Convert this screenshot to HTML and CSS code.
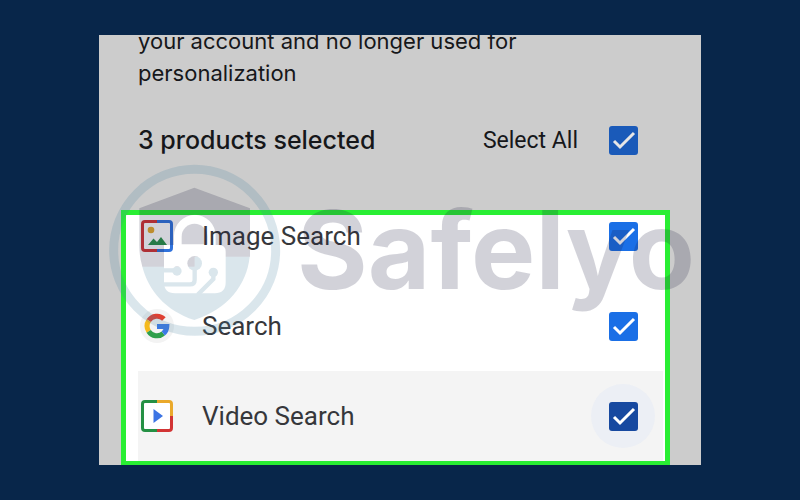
FILE: index.html
```html
<!DOCTYPE html>
<html lang="en">
<head>
    <meta charset="UTF-8">
    <title>3 products selected</title>
    <meta name="viewport" content="width=device-width, initial-scale=1.0">
    <link rel="stylesheet" href="styles.css">
</head>
<body>
    <main class="panel">
        <p class="intro">your account and no longer used for<br>personalization</p>

        <div class="select-all">
            <h1>3 products selected</h1>
            <label for="all">Select All</label>
            <input type="checkbox" id="all" class="check dim" checked>
        </div>

        <div class="highlight">
            <ul class="products">
                <li>
                    <svg class="icon" viewBox="0 0 34 34" fill="none" stroke-width="3">
                        <path d="M17 2.500H5Q2.500 2.500 2.500 5V29Q2.500 31.500 5 31.500H17" stroke="#d23434"/>
                        <path d="M17 2.500H29Q31.500 2.500 31.500 5V29Q31.500 31.500 29 31.500H17" stroke="#2f72dc"/>
                        <circle cx="11" cy="11" r="3.300" fill="#e6a92b"/>
                        <path d="M8 26L13.500 19.500L17 23L21 18L27 26Z" fill="#2a9249"/>
                    </svg>
                    <label for="image">Image Search</label>
                    <span class="halo"><input type="checkbox" id="image" class="check" checked></span>
                </li>
                <li>
                    <svg class="icon" viewBox="0 0 34 34">
                        <circle cx="17" cy="17" r="17" fill="#f3f3f3"/>
                        <g fill="none" stroke-width="5">
                            <path d="M8.700 11.700A9.800 9.800 0 0 1 23.900 10" stroke="#df4032"/>
                            <path d="M8.700 22.300A9.800 9.800 0 0 1 8.700 11.700" stroke="#f5b91c"/>
                            <path d="M23.300 24.500A9.800 9.800 0 0 1 8.700 22.300" stroke="#2f9f4c"/>
                            <path d="M17 17.500H26.800A9.800 9.800 0 0 1 23.300 24.500" stroke="#3b78e7"/>
                        </g>
                    </svg>
                    <label for="search">Search</label>
                    <span class="halo"><input type="checkbox" id="search" class="check" checked></span>
                </li>
                <li class="active">
                    <svg class="icon" viewBox="0 0 34 34" fill="none" stroke-width="3">
                        <rect x="2.500" y="2.500" width="29" height="29" rx="2" fill="#fff"/>
                        <path d="M17 2.500H5Q2.500 2.500 2.500 5V29Q2.500 31.500 5 31.500H17" stroke="#259044"/>
                        <path d="M17 2.500H29Q31.500 2.500 31.500 5V17" stroke="#eaa92b"/>
                        <path d="M31.500 17V29Q31.500 31.500 29 31.500H17" stroke="#d23434"/>
                        <path d="M13.500 10V24L23 17Z" fill="#3c74e4"/>
                    </svg>
                    <label for="video">Video Search</label>
                    <span class="halo"><input type="checkbox" id="video" class="check" checked></span>
                </li>
            </ul>
        </div>

        <div class="watermark">
            <svg class="badge" viewBox="39 24 519 522">
                <mask id="lock">
                    <rect x="39" y="24" width="519" height="522" fill="#fff"/>
                    <path d="M237 270V242A62 62 0 0 1 362 242V270H372Q392 270 392 290V382Q392 415 359 415H240Q207 415 207 382V270Z" fill="#000"/>
                    <path d="M260 268V245A38 38 0 0 1 337 245V268Z" fill="#fff"/>
                    <g fill="none" stroke="#fff" stroke-width="13">
                        <path d="M205 346H240"/>
                        <path d="M299 325V374Q299 388 285 388H205"/>
                        <path d="M355 352V372L308 419"/>
                    </g>
                    <g fill="#fff">
                        <circle cx="246" cy="348" r="14"/>
                        <circle cx="299" cy="325" r="22"/>
                        <circle cx="355" cy="352" r="14"/>
                    </g>
                </mask>
                <circle class="ring" cx="299" cy="286" r="243"/>
                <g mask="url(#lock)">
                    <path class="shield-top" d="M298 98L465 160V305H299V335H142Q133 305 133 270V160Z"/>
                    <path class="shield-base" d="M142 335H299V305H464C455 390 398 462 298 495C210 466 160 405 142 335Z"/>
                </g>
            </svg>
            <span class="brand">Safelyo</span>
        </div>
    </main>
</body>
</html>
```

FILE: styles.css
```css
body {
    margin: 0;
    padding: 35px 99px;
    background: #08264a;
    color: #16171a;
    font-family: Roboto, "Liberation Sans", sans-serif;
}
.panel {
    position: relative;
    overflow: hidden;
    background: #ccc;
}
.intro {
    margin: -10px 39px 0;
    font-family: Inter, sans-serif;
    font-size: 22px;
    line-height: 32px;
}
.select-all {
    display: flex;
    align-items: center;
    height: 64px;
    margin: 19px 63px 0 39px;
    font-size: 23px;
}
.select-all h1 {
    flex: 1;
    margin: 0;
    font-family: Inter, sans-serif;
    font-size: 25px;
    font-weight: 500;
}
.select-all label {
    margin-right: 31px;
}
.check {
    appearance: none;
    width: 29px;
    height: 29px;
    margin: 0;
    border-radius: 3px;
    background: #1a6fe6 url("data:image/svg+xml,%3Csvg xmlns='http://www.w3.org/2000/svg' viewBox='0 0 29 29'%3E%3Cpath d='M5 15L11 21L25 7' fill='none' stroke='%23fff' stroke-width='3'/%3E%3C/svg%3E");
}
.check.dim {
    background-color: #1d64ce;
    filter: brightness(0.9);
}
.highlight {
    overflow: hidden;
    margin: 38px 31px 0 22px;
    border: 5px solid #29ee33;
    border-bottom-width: 4px;
    background: #fff;
}
.products {
    margin: -24px 2px 0 12px;
    padding: 0;
    list-style: none;
}
.products li {
    display: flex;
    align-items: center;
    height: 90px;
    padding: 0 8px 0 2px;
    color: #36373b;
    font-size: 26px;
}
.products label {
    flex: 1;
    margin-left: 28px;
}
.products .active {
    background: #f4f4f4;
}
.icon {
    width: 34px;
    height: 34px;
}
.halo {
    display: flex;
    align-items: center;
    justify-content: center;
    width: 64px;
    height: 64px;
    border-radius: 50%;
}
.active .halo {
    background: #eceff5;
}
.active .check {
    background-color: #1749a0;
}
/* logo laid over the whole panel */
.watermark {
    position: absolute;
    top: 128px;
    left: 9px;
    display: flex;
    align-items: center;
    pointer-events: none;
}
.badge {
    width: 173px;
    height: 174px;
}
.ring {
    fill: none;
    stroke: rgba(70, 130, 160, 0.2);
    stroke-width: 27px;
}
.shield-top {
    fill: rgba(30, 30, 65, 0.2);
}
.shield-base {
    fill: rgba(70, 130, 160, 0.2);
}
.brand {
    margin-left: 16px;
    color: rgba(30, 30, 65, 0.2);
    font-family: Inter, sans-serif;
    font-size: 108px;
    font-weight: 700;
    line-height: 172px;
}
```
